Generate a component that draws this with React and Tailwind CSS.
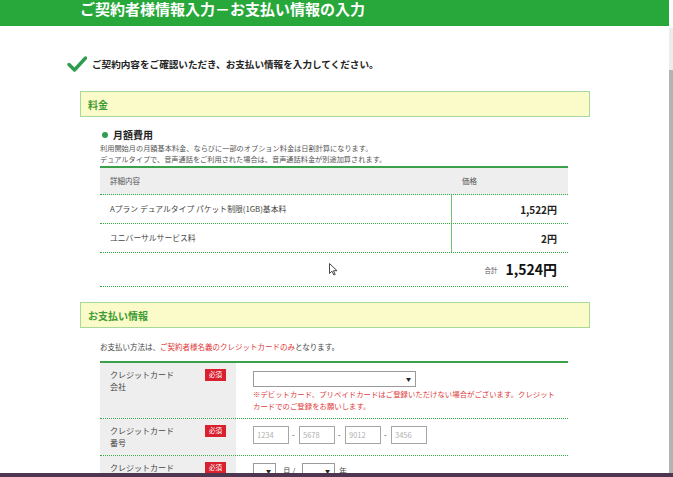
import React from "react";

const font = "font-['Noto_Sans_CJK_JP','Noto_Sans',sans-serif]";
const dot = "border-b border-dotted border-[#2fae3f]";

function Check() {
  return (
    <svg width="20" height="16" viewBox="0 0 20 16" className="shrink-0">
      <path d="M2 8.5 L7.5 14 L18.5 2" fill="none" stroke="#2e9d4d" strokeWidth="3.4" strokeLinecap="round" strokeLinejoin="round" />
    </svg>
  );
}

function SectionBox({ title }) {
  return (
    <div className="ml-[80px] w-[510px] h-[26px] bg-[#fbfbca] border border-[#a9d99a] flex items-center pl-[7px]">
      <span className="text-[10px] font-bold text-[#3f9b33]">{title}</span>
    </div>
  );
}

function Badge() {
  return (
    <span className="w-[21px] h-[12px] bg-[#d9202f] text-white text-[6.5px] flex items-center justify-center shrink-0">
      必須
    </span>
  );
}

function FormRow({ label2, children, h, last, pt }) {
  return (
    <div className={`flex ${last ? "" : dot}`} style={{ height: h }}>
      <div className="w-[136px] bg-[#eeeeee] flex pl-[10px] pr-[10px] pt-[6px] justify-between">
        <div className="text-[8px] leading-[12px] text-[#444]">
          <div>クレジットカード</div>
          <div>{label2}</div>
        </div>
        <Badge />
      </div>
      <div className="flex-1 pl-[17px]" style={{ paddingTop: pt }}>{children}</div>
    </div>
  );
}

function NumBox({ ph }) {
  return (
    <div className="w-[36px] h-[18px] border border-[#a6a6a6] flex items-center pl-[3px] text-[7.5px] text-[#b0b0b0]">
      {ph}
    </div>
  );
}

function Select({ w }) {
  return (
    <div className="h-[16px] border border-[#9a9a9a] flex items-center justify-end pr-[4px] bg-white" style={{ width: w }}>
      <span className="text-[5px] text-[#222]">▼</span>
    </div>
  );
}

export default function App() {
  return (
    <div className={`relative w-[673px] h-[477px] overflow-hidden bg-white flex ${font}`}>
      <div className="w-[669px] flex flex-col">
        {/* header */}
        <div className="h-[26px] bg-[#28a73a] pl-[80px] shrink-0">
          <div className="text-[15px] leading-[17px] font-bold text-white">ご契約者様情報入力－お支払い情報の入力</div>
        </div>

        <div className="flex items-center gap-[5px] ml-[67px] mt-[30px] h-[16px]">
          <Check />
          <span className="text-[9.6px] font-semibold text-[#222]">ご契約内容をご確認いただき、お支払い情報を入力してください。</span>
        </div>

        <div className="mt-[19px]">
          <SectionBox title="料金" />
        </div>

        <div className="ml-[100px] w-[468px] mt-[11px]">
          <div className="flex items-center gap-[5px] pl-[2px] h-[13px]">
            <span className="w-[6px] h-[6px] rounded-full bg-[#2e9d4d]" />
            <span className="text-[10px] font-bold text-[#222]">月額費用</span>
          </div>
          <div className="text-[7.2px] leading-[11px] text-[#555] mt-[2px]">
            <div>利用開始月の月額基本料金、ならびに一部のオプション料金は日割計算になります。</div>
            <div>デュアルタイプで、音声通話をご利用された場合は、音声通話料金が別途加算されます。</div>
          </div>

          <div className="border-t-2 border-[#3aa04a] mt-[1px]">
            <div className={`h-[27px] bg-[#eeeeee] flex items-center ${dot} text-[7.5px] text-[#555]`}>
              <div className="w-[352px] pl-[10px]">詳細内容</div>
              <div className="pl-[10px]">価格</div>
            </div>
            {[
              ["Aプラン デュアルタイプ パケット制限(1GB)基本料", "1,522円"],
              ["ユニバーサルサービス料", "2円"],
            ].map(([name, price]) => (
              <div key={name} className={`h-[29px] flex ${dot}`}>
                <div className="w-[352px] pl-[10px] flex items-center text-[7.8px] text-[#444] border-r border-[#6cc46c]">{name}</div>
                <div className="flex-1 flex items-center justify-end pr-[11px] text-[10px] font-bold text-[#222]">{price}</div>
              </div>
            ))}
            <div className={`h-[34px] flex items-center justify-end pr-[11px] gap-[8px] ${dot}`}>
              <span className="text-[6.5px] text-[#555] mt-[3px]">合計</span>
              <span className="text-[14px] font-bold text-[#111]">1,524円</span>
            </div>
          </div>
        </div>

        <div className="mt-[15px]">
          <SectionBox title="お支払い情報" />
        </div>

        <div className="ml-[100px] w-[468px]">
          <div className="mt-[13px] h-[11px] text-[7.5px] text-[#444] leading-[11px]">
            お支払い方法は、<span className="text-[#e03a3a]">ご契約者様名義のクレジットカードのみ</span>となります。
          </div>
          <div className="mt-[9px] border-t-2 border-[#3aa04a]">
            <FormRow label2="会社" h="56px" pt="8px">
              <Select w="163px" />
              <div className="mt-[1px] text-[7.4px] leading-[11.5px] text-[#e03a3a]">
                <div>※デビットカード、プリペイドカードはご登録いただけない場合がございます。クレジット</div>
                <div>カードでのご登録をお願いします。</div>
              </div>
            </FormRow>
            <FormRow label2="番号" h="37px" pt="7px">
              <div className="flex items-center gap-[3px]">
                <NumBox ph="1234" />
                <span className="text-[8px] text-[#444] w-[4px]">-</span>
                <NumBox ph="5678" />
                <span className="text-[8px] text-[#444] w-[4px]">-</span>
                <NumBox ph="9012" />
                <span className="text-[8px] text-[#444] w-[4px]">-</span>
                <NumBox ph="3456" />
              </div>
            </FormRow>
            <FormRow label2="有効期限" h="40px" pt="7px" last>
              <div className="flex items-center gap-[4px] text-[7.5px] text-[#444]">
                <Select w="23px" />
                <span className="mx-[3px]">月 /</span>
                <Select w="33px" />
                <span>年</span>
              </div>
            </FormRow>
          </div>
        </div>
      </div>

      {/* scrollbar */}
      <div className="w-[4px] flex flex-col">
        <div className="h-[28px] bg-white" />
        <div className="h-[42px] bg-[#ececec]" />
        <div className="flex-1 bg-[#b3b3b3]" />
      </div>

      {/* mouse cursor */}
      <svg className="absolute left-[329px] top-[263px]" width="9" height="13" viewBox="0 0 9 13">
        <path d="M0.5 0.5 L0.5 10.5 L3 8.2 L4.8 12 L6.2 11.4 L4.5 7.7 L8 7.7 Z" fill="white" stroke="#333" strokeWidth="0.9" />
      </svg>

      {/* bottom window edge */}
      <div className="absolute left-0 right-0 bottom-0 h-[4px] bg-[#4e3650]" />
    </div>
  );
}
